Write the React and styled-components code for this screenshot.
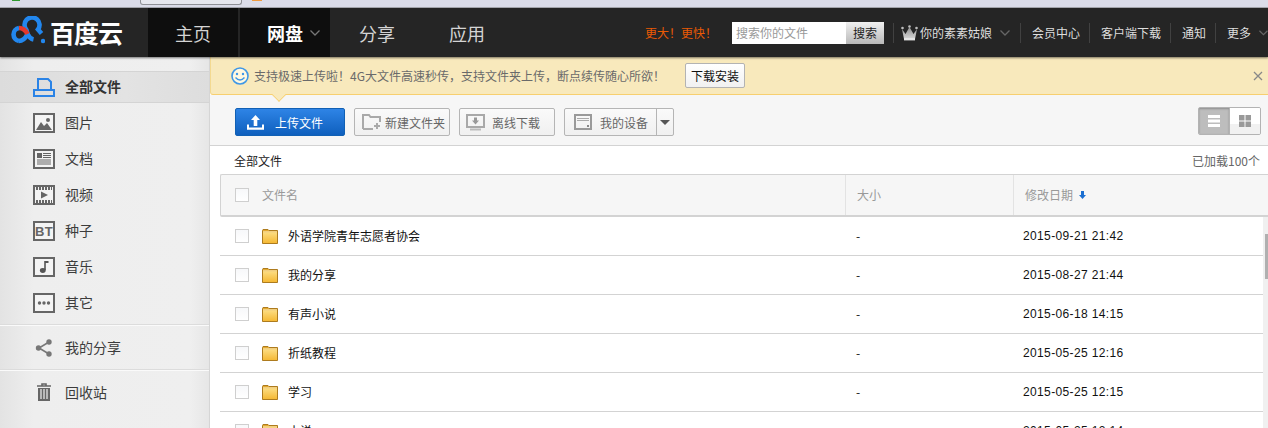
import React from "react";
import styled, { createGlobalStyle } from "styled-components";

const Global = createGlobalStyle`
  html, body { margin: 0; padding: 0; height: 428px; overflow: hidden; background: #fff; }
  body { font-family: "Noto Sans CJK SC", "Liberation Sans", sans-serif; font-size: 12px; color: #333; }
  * { box-sizing: border-box; }
`;

const Page = styled.div`height: 428px; overflow: hidden; display: flex; flex-direction: column;`;

const BrowserStrip = styled.div`
  height: 8px; flex: none; background: #dbdce9; border-bottom: 1px solid #a9aab2;
  display: flex; align-items: flex-start; padding-left: 12px;
`;
const StripDot = styled.span`width: ${p => p.$w}px; height: 1px; background: ${p => p.$c}; margin-right: ${p => p.$gap}px;`;
const StripTab = styled.span`
  width: 102px; height: 5px; background: #e6e7ee; border: 1px solid #8f9096; border-top: none;
  border-radius: 0 0 3px 3px; margin-right: 10px;
`;

const Header = styled.header`
  height: 49px; flex: none; background: #252525; display: flex; align-items: stretch;
  box-shadow: 0 1px 2px rgba(0,0,0,.5); position: relative; z-index: 2;
`;
const Logo = styled.div`width: 148px; flex: none; display: flex; align-items: center; padding-left: 11px; gap: 5px;`;
const LogoMark = styled.svg`margin-bottom: 5px; flex: none;`;
const LogoText = styled.span`font-size: 25px; font-weight: 700; color: #fff; line-height: 1; letter-spacing: -1px;`;
const Tabs = styled.nav`display: flex; flex: none;`;
const Tab = styled.a`
  width: 90px; display: flex; align-items: center; justify-content: center; gap: 7px;
  font-size: 18px; color: ${p => p.$bold ? "#fff" : "#d4d4d4"}; font-weight: ${p => p.$bold ? 700 : 400};
  background: ${p => p.$dark ? "#0e0e0e" : "transparent"}; margin-right: ${p => p.$dark ? 2 : 0}px;
  padding-left: ${p => p.$bold ? 17 : 0}px;
`;
const Right = styled.div`flex: 1; min-width: 0; display: flex; align-items: center; padding-left: 133px; color: #dedede; white-space: nowrap; overflow: hidden;`;
const Promo = styled.span`color: #ea5a04; width: 87px; flex: none; font-size: 12px;`;
const SearchBox = styled.div`display: flex; width: 152px; height: 22px; flex: none; margin-right: 9px;`;
const SearchInput = styled.div`flex: 1; background: #fff; color: #999; line-height: 22px; padding-left: 4px;`;
const SearchBtn = styled.div`width: 38px; text-align: center; line-height: 22px; color: #222; background: linear-gradient(#f0f0f0, #b9b9b9);`;
const NavDivider = styled.i`width: 1px; height: 20px; background: #414141; flex: none; margin-right: ${p => p.$r}px;`;
const NavLink = styled.span`margin-right: ${p => p.$r}px; display: flex; align-items: center; flex: none;`;

const Body = styled.div`flex: 1; display: flex; min-height: 0;`;
const Sidebar = styled.aside`
  width: 210px; flex: none; padding-top: 14px;
  border-right: 1px solid #d5d5d5;
  background: linear-gradient(90deg, #e3e3e3 0, #eeeeee 34px, #efefef 190px, #e6e6e6 209px);
`;
const ItemLabel = styled.span`display: block; margin-top: -2px;`;
const ActiveItem = styled.a`
  height: 32px; display: flex; align-items: center; padding-left: 33px; gap: 10px;
  background: linear-gradient(90deg, #dcdcdc, #e3e3e3 60%, #dddddd);
  border-top: 1px solid #d4d4d4; border-bottom: 1px solid #d4d4d4;
  font-size: 14px; font-weight: 700; color: #333; margin-bottom: 2px;
`;
const Item = styled.a`
  height: 36px; display: flex; align-items: center; padding-left: 33px; gap: 10px;
  font-size: 14px; color: #3c3c3c;
`;
const IconSlot = styled.span`width: 22px; height: 20px; display: flex; align-items: center; justify-content: center; flex: none;`;
const SideRule = styled.div`height: 2px; background: #dcdcdc; border-bottom: 1px solid #fafafa; margin: ${p => p.$m};`;

const Main = styled.main`flex: 1; min-width: 0; display: flex; flex-direction: column;`;
const Banner = styled.div`
  height: 38px; flex: none; background: #f8e9bc; border-bottom: 1px solid #f7cf6f; border-left: 1px solid #f3d990;
  border-bottom-left-radius: 3px; display: flex; align-items: center; padding-left: 20px; position: relative; color: #6a6a6a;
`;
const BannerText = styled.span`margin-left: 5px; width: 431px; flex: none; white-space: nowrap;`;
const BannerBtn = styled.button`
  width: 60px; height: 25px; padding: 0; background: linear-gradient(#fff, #f1f1f1); border: 1px solid #b3b3b3; border-radius: 2px;
  font: inherit; color: #111;
`;
const Close = styled.span`margin-left: auto; margin-right: 4px; width: 12px; height: 12px; display: flex;`;
const Pointer = styled.span`
  position: absolute; left: 62px; bottom: -8px; width: 12px; height: 12px; transform: rotate(45deg) scale(.8,.8);
  background: #f8e9bc; border-right: 1px solid #f7cf6f; border-bottom: 1px solid #f7cf6f; transform-origin: center; margin-bottom: 1px;
`;
const Toolbar = styled.div`
  height: 51px; flex: none; background: #f6f6f6; border-bottom: 1px solid #d3d3d3;
  display: flex; align-items: center; padding: 4px 7px 0 25px;
`;
const Upload = styled.a`
  width: 110px; height: 28px; margin-right: 9px; flex: none; border-radius: 2px; border: 1px solid #1160b4;
  background: linear-gradient(#2e84e6, #0f5fbd); color: #fff; display: flex; align-items: center; padding-left: 11px; gap: 11px;
  white-space: nowrap;
`;
const ToolBtn = styled.a`
  width: ${p => p.$w}px; height: 28px; margin-right: 9px; flex: none; border: 1px solid #b5b5b5; border-radius: 2px;
  background: linear-gradient(#fafafa, #f0f0f0); color: #666; display: flex; align-items: center; padding-left: ${p => p.$pl}px; gap: ${p => p.$gap}px;
  white-space: nowrap;
`;
const ToolIconBox = styled.span`display: flex; flex: none;`;
const Caret = styled.span`
  margin-left: auto; width: 17px; height: 100%; flex: none; border-left: 1px solid #b5b5b5; display: flex; align-items: center; justify-content: center;
  &::after { content: ""; border: 5px solid transparent; border-top: 5px solid #555; border-bottom: none; }
`;
const ViewToggle = styled.div`
  margin-left: auto; width: 63px; height: 28px; display: flex; border: 1px solid #b3b3b3; border-radius: 2px; overflow: hidden; margin-top: -2px;
`;
const ViewBtn = styled.span`
  flex: 1; display: flex; align-items: center; justify-content: center;
  background: ${p => p.$on ? "#bdbdbd" : "linear-gradient(#fff 60%, #f1f1f1 60%)"};
  box-shadow: ${p => p.$on ? "inset 0 1px 2px #8e8e8e" : "none"};
  border-right: ${p => p.$on ? "1px solid #b3b3b3" : "none"};
`;
const Crumbs = styled.div`
  height: 28px; flex: none; display: flex; align-items: center; justify-content: space-between; padding: 0 8px 0 24px; color: #222;
`;
const Loaded = styled.span`color: #666;`;
const TableArea = styled.div`margin-left: 10px; flex: 1; min-height: 0; display: flex; flex-direction: column;`;
const HeadRow = styled.div`
  height: 43px; flex: none; background: #f6f6f6; border: 1px solid #d3d3d3; border-right: none; border-bottom-width: 2px;
  border-radius: 2px 0 0 2px; display: flex; align-items: center; color: #999;
`;
const HeadName = styled.div`width: 625px; flex: none; height: 100%; display: flex; align-items: center; padding-left: 14px; border-right: 1px solid #e3e3e3;`;
const HeadSize = styled.div`width: 168px; flex: none; height: 100%; display: flex; align-items: center; padding-left: 11px; border-right: 1px solid #e3e3e3;`;
const HeadDate = styled.div`padding-left: 11px; display: flex; align-items: center; gap: 6px;`;
const HeadLabel = styled.span`margin-top: -2px;`;
const Check = styled.span`
  width: 14px; height: 14px; flex: none; border: 1px solid #cfcfcf; background: linear-gradient(#f7f8fa, #fff); margin-right: ${p => p.$r}px;
`;
const RowsWrap = styled.div`flex: 1; min-height: 0; display: flex; overflow: hidden;`;
const Rows = styled.div`flex: 1; min-width: 0;`;
const Row = styled.div`
  height: 39px; display: flex; align-items: center; border-bottom: 1px solid #d3d3d3; color: #111;
`;
const NameCell = styled.div`width: 626px; flex: none; display: flex; align-items: center; padding-left: 15px;`;
const NameText = styled.span`margin-top: -2px;`;
const SizeCell = styled.div`width: 167px; flex: none; padding-left: 10px; margin-top: -1px;`;
const DateCell = styled.div`padding-left: 10px; font-family: "Liberation Sans", sans-serif; font-size: 12px; letter-spacing: .36px; margin-top: -1px;`;
const FolderWrap = styled.span`width: 16px; height: 15px; margin-right: 10px; flex: none; display: flex;`;
const Track = styled.div`width: 5px; flex: none; background: #f0f0f0; padding: 17px 0 0 2px;`;
const Thumb = styled.div`height: 45px; background: #b0b0b0;`;

const Line = ({ children, w = 22, h = 20, vb, ...r }) => (
  <svg width={w} height={h} viewBox={vb || `0 0 ${w} ${h}`} {...r}>{children}</svg>
);
const Box = ({ children }) => (
  <Line><rect x="1" y="1" width="20" height="18" fill="#f4f4f4" stroke="#666" strokeWidth="2" />{children}</Line>
);

const IconAll = () => (
  <Line>
    <path d="M1 13 H21 V19 H1 Z M5 13 V2 H15 L18 5 V13" fill="none" stroke="#2a83e6" strokeWidth="2" />
  </Line>
);
const IconImg = () => <Box><circle cx="15" cy="7" r="2" fill="#666" /><path d="M3 17 L8 9 L11 13 L14 10 L19 17 Z" fill="#666" /></Box>;
const IconDoc = () => <Box><rect x="4" y="4" width="5" height="5" fill="#666" /><path d="M10 4.5H18M10 6.5H18M10 8.5H18M4 11H18M4 13H18M4 15H18" stroke="#666" /></Box>;
const IconVideo = () => <Box><path d="M3 3.5H19M3 16.5H19" stroke="#666" strokeWidth="3" strokeDasharray="2 1" /><path d="M8 6.5 L15 10 L8 13.5 Z" fill="#666" /></Box>;
const IconBT = () => <Box><text x="11" y="15" textAnchor="middle" fontFamily="Liberation Sans, sans-serif" fontWeight="700" fontSize="13" letterSpacing=".4" fill="#666">BT</text></Box>;
const IconMusic = () => <Box><path d="M12 4V13" stroke="#555" strokeWidth="1.6" /><path d="M12 4 H15.5 V6 H12" fill="#555" /><ellipse cx="9.8" cy="13.5" rx="2.9" ry="2.4" fill="#555" /></Box>;
const IconOther = () => <Box><circle cx="6.5" cy="10" r="1.7" fill="#666" /><circle cx="11" cy="10" r="1.7" fill="#666" /><circle cx="15.5" cy="10" r="1.7" fill="#666" /></Box>;
const IconShare = () => (
  <Line>
    <path d="M16 4 L6 10 L16 16" fill="none" stroke="#777" strokeWidth="1.6" />
    <circle cx="16" cy="4" r="2.7" fill="#777" /><circle cx="5.5" cy="10" r="2.7" fill="#777" /><circle cx="16" cy="16" r="2.7" fill="#777" />
  </Line>
);
const IconTrash = () => (
  <Line>
    <path d="M4 3H18M9 3V1H13V3" fill="none" stroke="#666" strokeWidth="1.6" />
    <path d="M5 5H17V18H5Z" fill="#666" />
    <path d="M8 6V16M11 6V16M14 6V16" stroke="#efefef" strokeWidth="1.2" />
  </Line>
);
const Folder = () => (
  <svg width="16" height="15" viewBox="0 0 16 15">
    <defs><linearGradient id="fg" x1="0" y1="0" x2="0" y2="1"><stop offset="0" stopColor="#fcdc80" /><stop offset="1" stopColor="#f5b935" /></linearGradient></defs>
    <path d="M.5 1.5 L1 .5 H6 L7 1.5 H15.5 V14.5 H.5 Z" fill="#e3a92f" stroke="#ad7b1e" />
    <rect x="1" y="2.5" width="14" height="1" fill="#fff3cf" />
    <rect x="1" y="3.5" width="14" height="10.5" fill="url(#fg)" />
  </svg>
);
const Chevron = ({ c = "#777", ...r }) => (
  <svg width="10" height="6" viewBox="0 0 10 6" {...r}><path d="M.5 .5 L5 5 L9.5 .5" fill="none" stroke={c} strokeWidth="1.3" /></svg>
);

const rows = [
  ["外语学院青年志愿者协会", "2015-09-21 21:42"],
  ["我的分享", "2015-08-27 21:44"],
  ["有声小说", "2015-06-18 14:15"],
  ["折纸教程", "2015-05-25 12:16"],
  ["学习", "2015-05-25 12:15"],
  ["小说", "2015-05-25 12:14"],
];

const sideItems = [
  ["图片", IconImg], ["文档", IconDoc], ["视频", IconVideo],
  ["种子", IconBT], ["音乐", IconMusic], ["其它", IconOther],
];

export default function App() {
  return (
    <Page>
      <Global />
      <BrowserStrip>
        <StripDot $w={8} $c="#2f9a2f" $gap={120} />
        <StripTab />
        <StripDot $w={10} $c="#f09a3e" $gap={0} />
      </BrowserStrip>
      <Header>
        <Logo>
          <LogoMark width="34" height="28" viewBox="0 0 34 28">
            <path d="M8 25 A6.6 6.6 0 0 1 8 12" fill="none" stroke="#2287ee" strokeWidth="4.6" />
            <path d="M8 25 C13 25 15 21 16.5 18 L15.5 14 A7.5 7.5 0 1 1 27 13.5 L30.5 17.5" fill="none" stroke="#2287ee" strokeWidth="4.6" />
            <path d="M16.5 18 C18 21 20 23 22.5 23.5" fill="none" stroke="#2287ee" strokeWidth="4.6" />
            <path d="M8 12 C12 12 14.5 14 16.5 18" fill="none" stroke="#e2382c" strokeWidth="4.6" />
            <circle cx="32" cy="25" r="2.2" fill="#2287ee" />
          </LogoMark>
          <LogoText>百度云</LogoText>
        </Logo>
        <Tabs>
          <Tab $dark>主页</Tab>
          <Tab $dark $bold>网盘<Chevron /></Tab>
          <Tab>分享</Tab>
          <Tab>应用</Tab>
        </Tabs>
        <Right>
          <Promo>更大！更快！</Promo>
          <SearchBox>
            <SearchInput>搜索你的文件</SearchInput>
            <SearchBtn>搜索</SearchBtn>
          </SearchBox>
          <NavDivider $r={7} />
          <NavLink $r={10}>
            <svg width="17" height="16" viewBox="0 0 17 16" style={{ marginRight: 2 }}>
              <defs><linearGradient id="cr" x1="0" y1="0" x2="0" y2="1"><stop offset="0" stopColor="#8d8d8d" /><stop offset="1" stopColor="#d8d8d8" /></linearGradient></defs>
              <path d="M1 4 L4.5 9 L8.5 2 L12.5 9 L16 4 L14 14 H3 Z" fill="url(#cr)" />
              <circle cx="1.5" cy="3" r="1.3" fill="#bdbdbd" /><circle cx="8.5" cy="1.5" r="1.3" fill="#bdbdbd" /><circle cx="15.5" cy="3" r="1.3" fill="#bdbdbd" />
              <rect x="3" y="13" width="11" height="2.4" fill="#e6e6e6" />
            </svg>
            你的素素姑娘
            <Chevron c="#666" style={{ marginLeft: 8 }} />
          </NavLink>
          <NavDivider $r={11} />
          <NavLink $r={9}>会员中心</NavLink>
          <NavDivider $r={11} />
          <NavLink $r={9}>客户端下载</NavLink>
          <NavDivider $r={11} />
          <NavLink $r={9}>通知</NavLink>
          <NavDivider $r={11} />
          <NavLink $r={8}>更多</NavLink>
          <Chevron c="#666" />
        </Right>
      </Header>
      <Body>
        <Sidebar>
          <ActiveItem><IconSlot><IconAll /></IconSlot><ItemLabel>全部文件</ItemLabel></ActiveItem>
          {sideItems.map(([label, Icon]) => (
            <Item key={label}><IconSlot><Icon /></IconSlot><ItemLabel>{label}</ItemLabel></Item>
          ))}
          <SideRule $m="3px 0 4px" />
          <Item><IconSlot><IconShare /></IconSlot><ItemLabel>我的分享</ItemLabel></Item>
          <SideRule $m="3px 0 4px" />
          <Item><IconSlot><IconTrash /></IconSlot><ItemLabel>回收站</ItemLabel></Item>
        </Sidebar>
        <Main>
          <Banner>
            <svg width="18" height="18" viewBox="0 0 18 18">
              <circle cx="9" cy="9" r="8" fill="#fff8e0" stroke="#3f97e6" strokeWidth="1.6" />
              <circle cx="6" cy="7" r="1.2" fill="#3f97e6" /><circle cx="12" cy="7" r="1.2" fill="#3f97e6" />
              <path d="M4.5 10.5 Q9 15.5 13.5 10.5" fill="none" stroke="#3f97e6" strokeWidth="1.4" />
            </svg>
            <BannerText>支持极速上传啦！4G大文件高速秒传，支持文件夹上传，断点续传随心所欲！</BannerText>
            <BannerBtn>下载安装</BannerBtn>
            <Close>
              <svg width="12" height="12" viewBox="0 0 12 12"><path d="M2 2L10 10M10 2L2 10" stroke="#888" strokeWidth="1.3" /></svg>
            </Close>
            <Pointer />
          </Banner>
          <Toolbar>
            <Upload>
              <svg width="17" height="15" viewBox="0 0 17 15">
                <path d="M8.5 0 L13 5 H10.3 V11 H6.7 V5 H4 Z" fill="#fff" /><path d="M0 9.5H2V12.5H15V9.5H17V14.7H0Z" fill="#fff" />
              </svg>
              上传文件
            </Upload>
            <ToolBtn $w={96} $pl={7} $gap={3}>
              <ToolIconBox>
                <svg width="20" height="16" viewBox="0 0 20 16">
                  <path d="M1 15V1H7L8.5 3H18V8M1 15H11" fill="none" stroke="#a9a9a9" strokeWidth="2" />
                  <path d="M15 9V15M12 12H18" stroke="#a9a9a9" strokeWidth="2" />
                </svg>
              </ToolIconBox>
              新建文件夹
            </ToolBtn>
            <ToolBtn $w={96} $pl={6} $gap={7}>
              <ToolIconBox>
                <svg width="19" height="17" viewBox="0 0 19 17">
                  <rect x="1" y="1" width="17" height="12" fill="none" stroke="#a9a9a9" strokeWidth="2" />
                  <path d="M8 3.5H11V6.5H13L9.5 10.5L6 6.5H8Z" fill="#999" /><rect x="4" y="14.5" width="11" height="2" fill="#bbb" />
                </svg>
              </ToolIconBox>
              离线下载
            </ToolBtn>
            <ToolBtn $w={110} $pl={9} $gap={8}>
              <ToolIconBox>
                <svg width="18" height="16" viewBox="0 0 18 16">
                  <rect x="1" y="1" width="16" height="14" fill="none" stroke="#9a9a9a" strokeWidth="2" />
                  <path d="M3 4.5H15M3 6.5H15" stroke="#aaa" /><rect x="13" y="11" width="2" height="2" fill="#888" />
                </svg>
              </ToolIconBox>
              我的设备
              <Caret />
            </ToolBtn>
            <ViewToggle>
              <ViewBtn $on>
                <svg width="12" height="12" viewBox="0 0 12 12"><path d="M0 0H12V3H0ZM0 4.5H12V7.5H0ZM0 9H12V12H0Z" fill="#fff" /></svg>
              </ViewBtn>
              <ViewBtn>
                <svg width="12" height="12" viewBox="0 0 12 12"><path d="M0 0H5.5V5.5H0ZM6.5 0H12V5.5H6.5ZM0 6.5H5.5V12H0ZM6.5 6.5H12V12H6.5Z" fill="#999" /></svg>
              </ViewBtn>
            </ViewToggle>
          </Toolbar>
          <Crumbs>
            <span>全部文件</span>
            <Loaded>已加载100个</Loaded>
          </Crumbs>
          <TableArea>
            <HeadRow>
              <HeadName><Check $r={13} /><HeadLabel>文件名</HeadLabel></HeadName>
              <HeadSize><HeadLabel>大小</HeadLabel></HeadSize>
              <HeadDate>
                <HeadLabel>修改日期</HeadLabel>
                <svg width="7" height="8" viewBox="0 0 7 8"><path d="M2 0H5V4H7L3.5 8L0 4H2Z" fill="#1b6fd1" /></svg>
              </HeadDate>
            </HeadRow>
            <RowsWrap>
              <Rows>
                {rows.map(([name, date]) => (
                  <Row key={name}>
                    <NameCell>
                      <Check $r={13} />
                      <FolderWrap><Folder /></FolderWrap>
                      <NameText>{name}</NameText>
                    </NameCell>
                    <SizeCell>-</SizeCell>
                    <DateCell>{date}</DateCell>
                  </Row>
                ))}
              </Rows>
              <Track><Thumb /></Track>
            </RowsWrap>
          </TableArea>
        </Main>
      </Body>
    </Page>
  );
}
